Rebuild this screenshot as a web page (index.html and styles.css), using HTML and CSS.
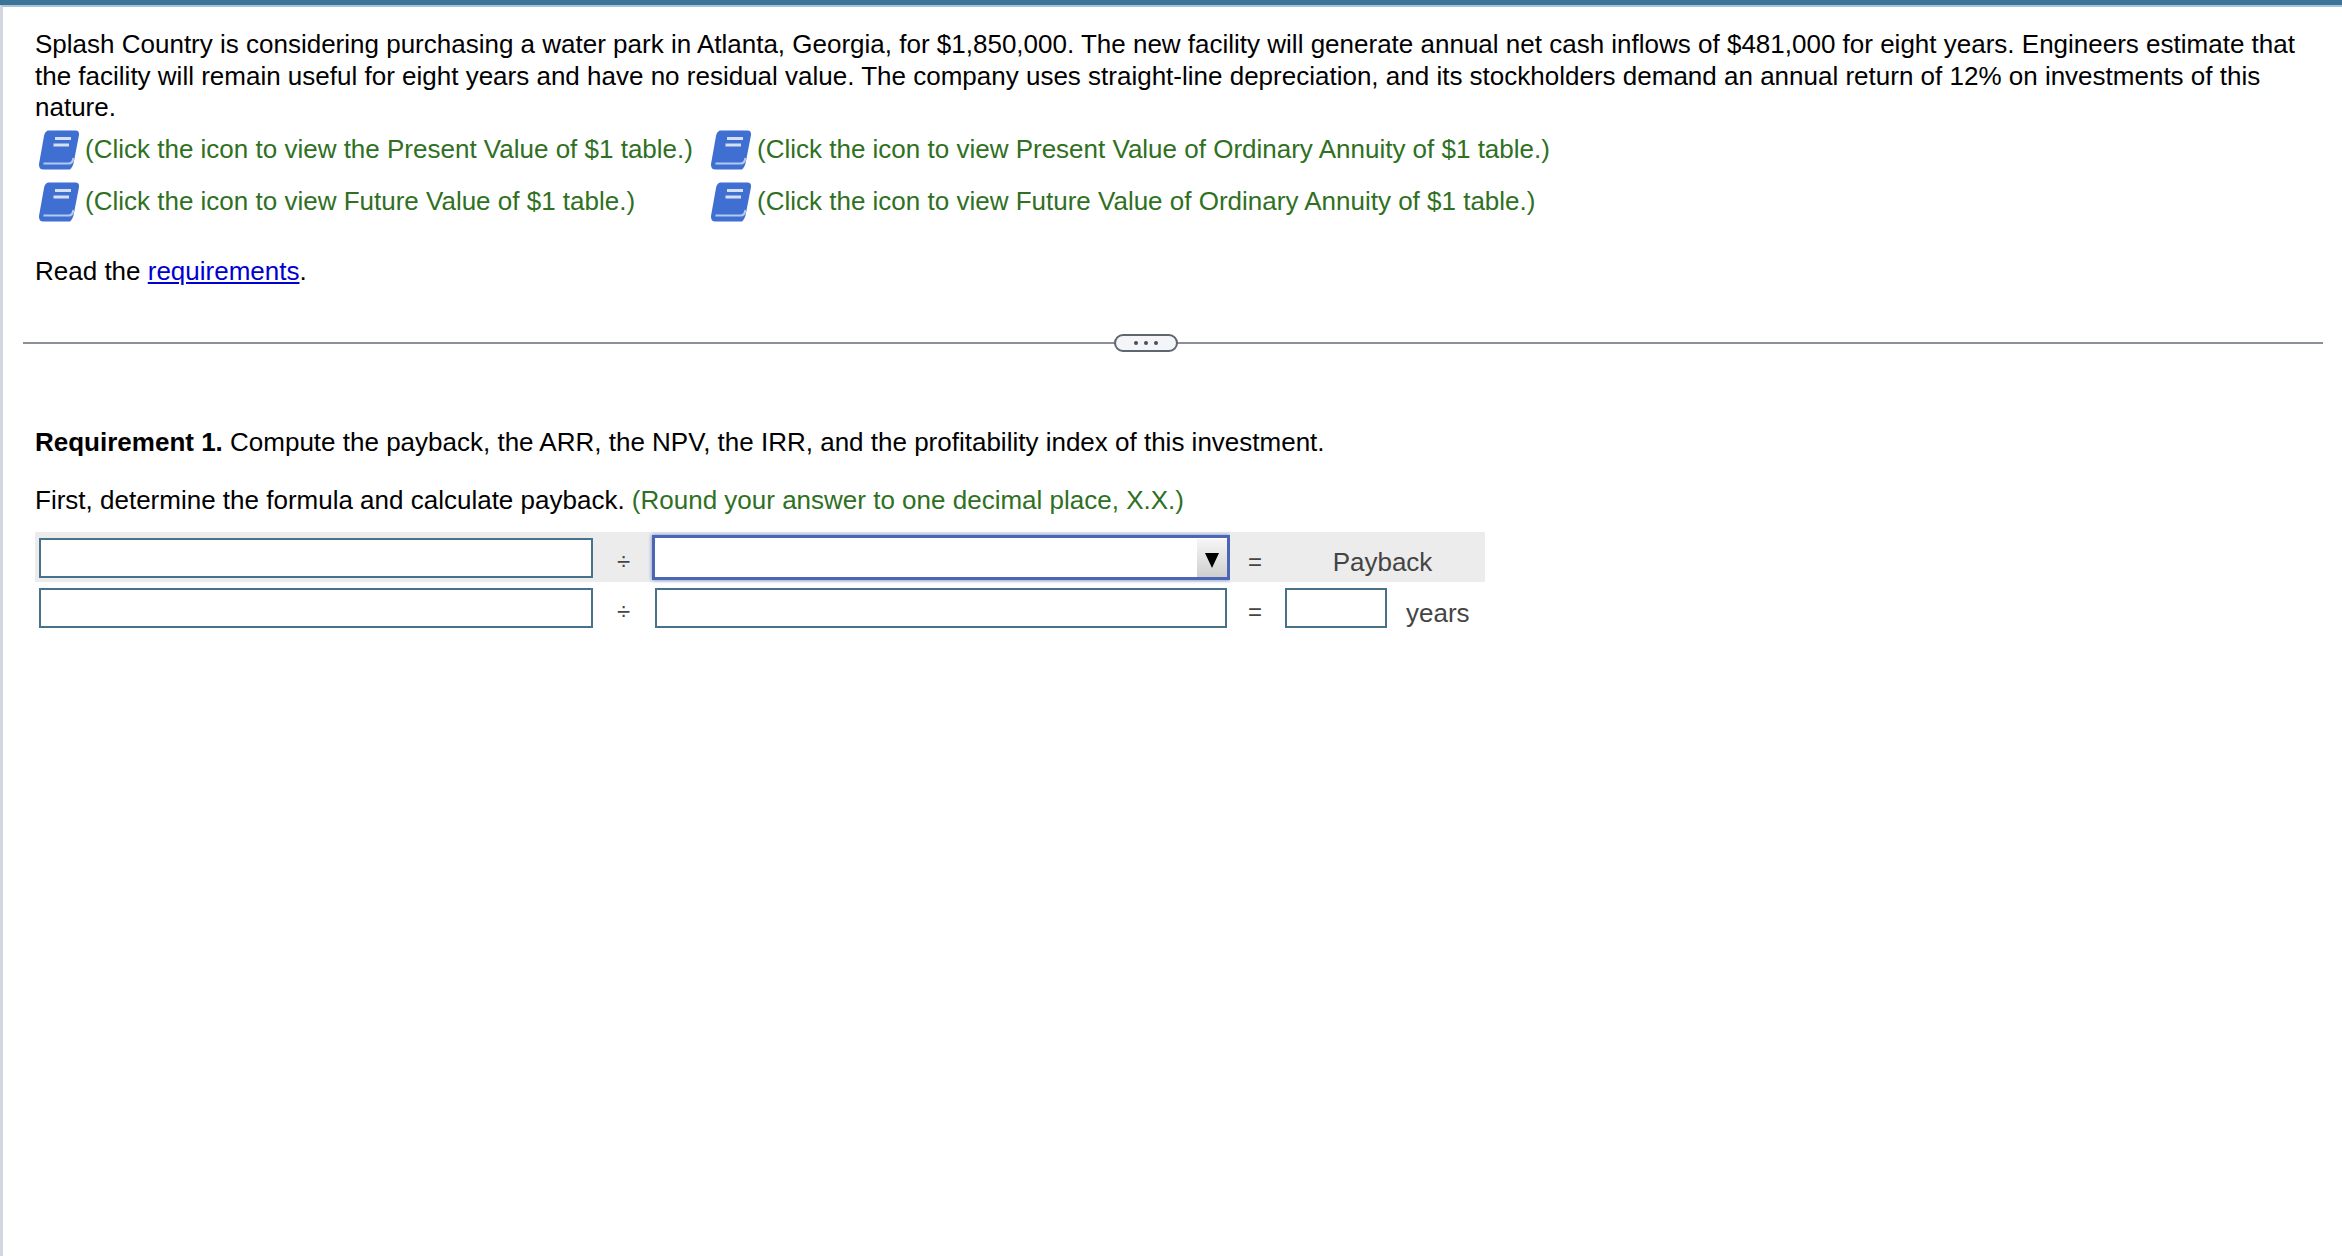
FILE: index.html
```html
<!DOCTYPE html>
<html lang="en">
<head>
<meta charset="utf-8">
<title>Splash Country</title>
<link rel="stylesheet" href="styles.css">
</head>
<body>
<svg class="defs" width="0" height="0" aria-hidden="true">
  <symbol id="book" viewBox="0 0 42 40">
    <path d="M11 0.500H37.500Q41.500 0.500 41 5L36 31Q35 37 32 39.500H5.500Q0.500 39.500 1 34L6 6Q7 0.500 11 0.500Z" fill="#3f6fd0"/>
    <path d="M5.500 33.500H31Q34.500 33.500 35.500 28" stroke="#b4c9f0" stroke-width="2.200" fill="none"/>
    <path d="M17 8.500H33M15.500 15H31" stroke="#d5e0f6" stroke-width="2.800" fill="none"/>
  </symbol>
</svg>
<main class="page">
  <p class="intro">Splash Country is considering purchasing a water park in Atlanta, Georgia, for $1,850,000. The new facility will generate annual net cash inflows of $481,000 for eight years. Engineers estimate that the facility will remain useful for eight years and have no residual value. The company uses straight-line depreciation, and its stockholders demand an annual return of 12% on investments of this nature.</p>
  <div class="links">
    <div class="link"><svg class="icon"><use href="#book"/></svg><span>(Click the icon to view the Present Value of $1 table.)</span></div>
    <div class="link"><svg class="icon"><use href="#book"/></svg><span>(Click the icon to view Present Value of Ordinary Annuity of $1 table.)</span></div>
    <div class="link"><svg class="icon"><use href="#book"/></svg><span>(Click the icon to view Future Value of $1 table.)</span></div>
    <div class="link"><svg class="icon"><use href="#book"/></svg><span>(Click the icon to view Future Value of Ordinary Annuity of $1 table.)</span></div>
  </div>
  <p class="read">Read the <a href="#req">requirements</a>.</p>
  <div class="divider"><span class="dots"><i></i><i></i><i></i></span></div>
  <p class="req"><b>Requirement 1.</b> Compute the payback, the ARR, the NPV, the IRR, and the profitability index of this investment.</p>
  <p class="first">First, determine the formula and calculate payback. <span class="hint">(Round your answer to one decimal place, X.X.)</span></p>
  <div class="formula">
    <div class="cell shade"><span class="box wide"></span></div>
    <div class="cell shade op">÷</div>
    <div class="cell shade"><span class="select"><span class="arrow"></span></span></div>
    <div class="cell shade op">=</div>
    <div class="cell shade result">Payback</div>
    <div class="cell"><span class="box wide"></span></div>
    <div class="cell op">÷</div>
    <div class="cell"><span class="box mid"></span></div>
    <div class="cell op">=</div>
    <div class="cell answer"><span class="box small"></span><span class="unit">years</span></div>
  </div>
</main>
</body>
</html>
```
FILE: styles.css
```css
* { box-sizing: border-box; }
html, body { margin: 0; padding: 0; }
body {
  height: 1256px;
  overflow: hidden;
  background: #fff;
  color: #000;
  font-family: "Liberation Sans", Arial, sans-serif;
  font-size: 26px;
  border-top: 5px solid #3c7399;
}
.defs { position: absolute; }
.page {
  height: 1251px;
  border-top: 2px solid #a9c4d8;
  border-left: 3px solid #d3d6de;
  padding: 22px 19px 0 20px;
}
p { margin: 0; }
.intro { line-height: 31.500px; padding-left: 12px; }
.links {
  display: grid;
  grid-template-columns: 672px auto;
  justify-content: start;
  grid-auto-rows: 52px;
  padding-left: 15px;
  color: #2f7022;
}
.link { display: flex; align-items: center; gap: 5px; }
.icon { width: 42px; height: 40px; flex: none; margin-top: 1px; }
.read { padding-left: 12px; margin-top: 27px; line-height: 32px; }
.read a { color: #0000d0; text-decoration: underline; }
.divider {
  margin-top: 55px;
  height: 2px;
  background: #8b8f96;
  display: flex;
  justify-content: center;
  align-items: center;
  padding-right: 54px;
}
.dots {
  width: 64px;
  height: 18px;
  background: #f3f5f9;
  border: 2px solid #5e6670;
  border-radius: 9px;
  display: flex;
  align-items: center;
  justify-content: center;
  gap: 6px;
}
.dots i { width: 4px; height: 4px; border-radius: 50%; background: #4a4f57; }
.req { padding-left: 12px; margin-top: 82px; line-height: 32px; }
.first { padding-left: 12px; margin-top: 26px; line-height: 32px; }
.hint { color: #2f7022; }
.formula {
  display: grid;
  grid-template-columns: 559px 59px 577px 50px 205px;
  grid-auto-rows: 50px;
  width: 1450px;
  margin: 16px 0 0 12px;
  color: #444;
}
.cell { display: flex; align-items: center; }
.shade { background: #ececec; }
.op { justify-content: center; font-size: 24px; padding-top: 10px; }
.box { display: block; height: 40px; margin-top: 2px; background: #fff; border: 2px solid #46728c; }
.wide { width: 554px; margin-left: 4px; }
.mid { width: 572px; margin-left: 2px; }
.small { width: 102px; flex: none; }
.select {
  width: 578px;
  height: 45px;
  margin: 2px 0 0 -1px;
  background: #fff;
  border: 3px solid #4a66b4;
  box-shadow: 0 0 4px #6f86c8;
  display: flex;
  justify-content: flex-end;
}
.arrow {
  width: 30px;
  margin-top: 1px;
  background: linear-gradient(#f6f6f6, #cfcfcf);
  display: flex;
  align-items: center;
  justify-content: center;
  padding-top: 5px;
}
.arrow::after {
  content: "";
  border-top: 15px solid #000;
  border-left: 7.500px solid transparent;
  border-right: 7.500px solid transparent;
}
.result { justify-content: center; padding-top: 12px; }
.answer { gap: 19px; padding-left: 5px; white-space: nowrap; }
.unit { line-height: 30px; padding-top: 12px; }
```
